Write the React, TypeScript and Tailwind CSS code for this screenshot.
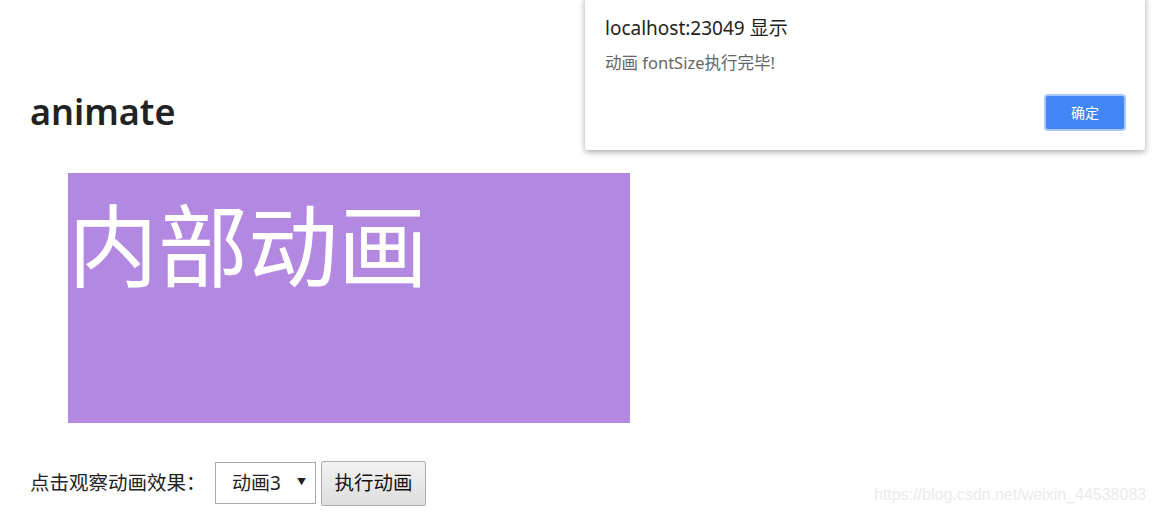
import React from "react";

export default function App() {
  const cjk = { fontFamily: '"Noto Sans", "Noto Sans CJK SC", sans-serif' };
  return (
    <div className="relative w-[1155px] h-[513px] overflow-hidden bg-white text-[#222]" style={cjk}>
      <div className="flex flex-col pl-[30px]">
        <h1 className="pt-[90px] text-[36px] leading-[44px] font-semibold text-[#222]">animate</h1>
        <div className="ml-[38px] mt-[39px] w-[562px] h-[250px] bg-[#b288e0] text-white text-[90px] leading-[144px]">
          内部动画
        </div>
        <div className="mt-[37px] flex items-center gap-[5px] h-[46px]">
          <span className="text-[19.5px] text-[#222] w-[180px]">点击观察动画效果：</span>
          <div className="relative w-[101px] h-[42px] border border-[#a9a9a9] bg-white flex items-center pl-[16px] text-[19px]">
            动画3
            <span className="absolute right-[9px] top-[12px] text-[9px]">▼</span>
          </div>
          <button className="w-[105px] h-[45px] border border-[#adadad] rounded-[2px] bg-gradient-to-b from-[#f2f2f2] to-[#dedede] text-[19.5px] text-[#111]">
            执行动画
          </button>
        </div>
      </div>

      <div className="absolute left-[874px] top-[483px] text-[16px] text-[#ebebeb]" style={{ fontFamily: '"Liberation Sans", sans-serif' }}>
        https://blog.csdn.net/weixin_44538083
      </div>

      <div className="absolute left-[585px] top-[-4px] w-[560px] h-[154px] bg-white rounded-[2px] shadow-[0_2px_6px_rgba(0,0,0,0.35)]">
        <div className="pl-[20px] pt-[18px] text-[19px] text-[#222]">localhost:23049 显示</div>
        <div className="pl-[20px] pt-[8px] text-[16.5px] text-[#666]">动画 fontSize执行完毕!</div>
        <div className="absolute left-[459px] top-[98px] w-[82px] h-[37px] rounded-[4px] border-2 border-[#aac8fa] bg-[#4285f4] text-white text-[14px] flex items-center justify-center">
          确定
        </div>
      </div>
    </div>
  );
}
